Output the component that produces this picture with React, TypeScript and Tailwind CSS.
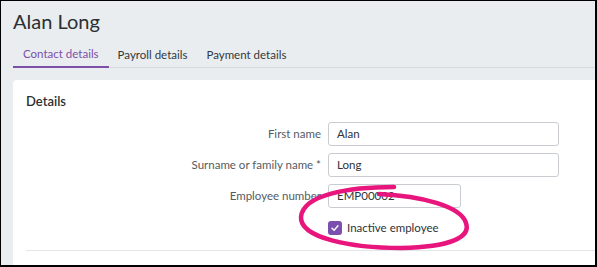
import React from "react";

// ── 欄位列 ──────────────────────────────────────────────
function FieldRow({ label, value, width }: { label: string; value: string; width: string }) {
  return (
    <div className="flex items-center h-[24px]">
      <label className="w-[315px] pr-[7px] text-right text-[11.5px] text-[#555b61]">{label}</label>
      <div
        className={`${width} h-[24px] border border-[#c9cdd1] rounded-[3px] bg-white flex items-center px-[8px] text-[11.5px] text-[#2f3338]`}
      >
        {value}
      </div>
    </div>
  );
}

export default function App() {
  return (
    <div
      className="relative w-[597px] h-[267px] overflow-hidden bg-[#e9edf0] border-l border-t border-r-2 border-b-2 border-black flex flex-col"
      style={{ fontFamily: 'Lato, "Noto Sans", sans-serif' }}
    >
      {/* 標題 */}
      <div className="pl-3 pt-[7px] h-[37px] text-[20px] leading-[26px] text-[#2b2f33]">Alan Long</div>

      {/* 分頁 */}
      <div className="ml-3 flex border-b border-[#d5dadf] h-[30px] text-[11.5px]">
        <div className="px-[10px] pt-[4px] flex items-center border-b-2 border-[#7d4fa8] -mb-px text-[#7d4fa8]">Contact details</div>
        <div className="px-[9px] pt-[4px] flex items-center text-[#33373b]">Payroll details</div>
        <div className="px-[10px] pt-[4px] flex items-center text-[#33373b]">Payment details</div>
      </div>

      {/* 卡片 */}
      <div className="ml-3 mt-3 flex-1 bg-white rounded-tl-[4px] pt-[12px]">
        <div className="pl-[13px] text-[13px] font-semibold text-[#2b2f33] leading-[18px]">Details</div>
        <div className="mt-[12px] flex flex-col gap-[7px]">
          <FieldRow label="First name" value="Alan" width="w-[231px]" />
          <FieldRow label="Surname or family name *" value="Long" width="w-[231px]" />
          <FieldRow label="Employee number" value="EMP00002" width="w-[133px]" />
        </div>
        <div className="mt-[13px] ml-[315px] flex items-center gap-[5px] h-[14px]">
          <div className="w-[14px] h-[14px] rounded-[3px] bg-[#7b4fae] flex items-center justify-center">
            <svg width="10" height="10" viewBox="0 0 10 10">
              <path d="M2 5.2 L4.1 7.2 L8 2.8" fill="none" stroke="white" strokeWidth="1.4" strokeLinecap="round" strokeLinejoin="round" />
            </svg>
          </div>
          <span className="text-[11.5px] text-[#2f3338]">Inactive employee</span>
        </div>
        <div className="mt-[15px] ml-[13px] border-t border-[#e3e6e9]" />
      </div>

      {/* 手繪圈選標記 */}
      <svg className="absolute left-0 top-0 pointer-events-none" width="597" height="267">
        <path
          d="M393 186 C350 186, 302 193, 300 216 C299 237, 350 247, 400 247 C450 246, 470 236, 465 222 C460 205, 420 195, 378 193"
          fill="none"
          stroke="#e8157c"
          strokeWidth="4.5"
          strokeLinecap="round"
        />
      </svg>
    </div>
  );
}
